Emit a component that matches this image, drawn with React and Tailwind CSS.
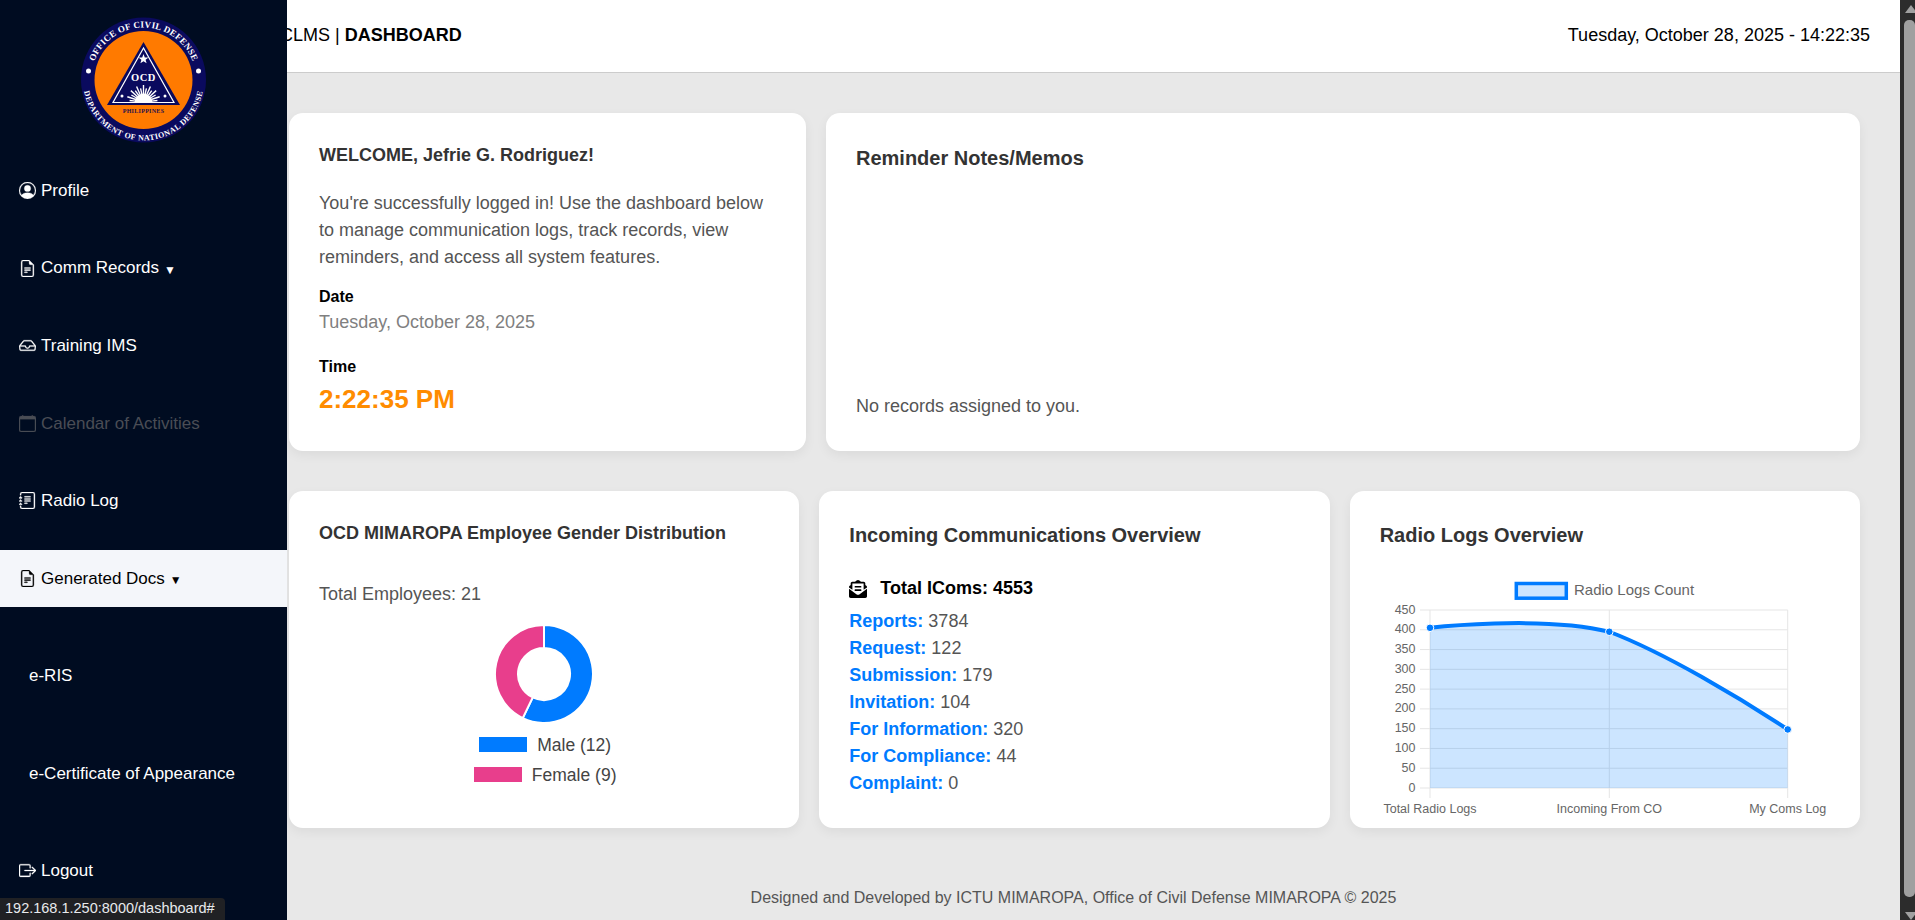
import {
  BsPersonCircle,
  BsFileEarmarkText,
  BsInbox,
  BsCalendar,
  BsJournalText,
  BsBoxArrowRight,
} from 'react-icons/bs';
import { FaEnvelopeOpenText } from 'react-icons/fa';

function Logo() {
  const rays = [];
  for (let a = -84; a <= 84; a += 12) {
    const r = (a * Math.PI) / 180;
    const len = a % 24 === 0 ? 17 : 14;
    rays.push(
      <line
        key={a}
        x1={142.5 + 8 * Math.sin(r)}
        y1={102 - 8 * Math.cos(r)}
        x2={142.5 + len * Math.sin(r)}
        y2={102 - len * Math.cos(r)}
        stroke="#fff"
        strokeWidth="1.4"
      />
    );
  }
  return (
    <svg width="140" height="140" viewBox="72 10 140 140" className="shrink-0">
      <defs>
        <path id="logoTop" d="M 90 80 A 52.5 52.5 0 0 1 195 80" />
        <path id="logoBottom" d="M 82 80 A 60.5 60.5 0 0 0 203 80" />
      </defs>
      <circle cx="142.5" cy="80" r="62.5" fill="#0a0a5e" />
      <circle cx="142.5" cy="80" r="49" fill="#ff7a00" />
      <text fontFamily="Liberation Serif, serif" fontSize="9" fontWeight="700" fill="#fff" letterSpacing="0.3">
        <textPath href="#logoTop" startOffset="50%" textAnchor="middle">OFFICE OF CIVIL DEFENSE</textPath>
      </text>
      <text fontFamily="Liberation Serif, serif" fontSize="8" fontWeight="700" fill="#fff" letterSpacing="0.5">
        <textPath href="#logoBottom" startOffset="50%" textAnchor="middle">DEPARTMENT OF NATIONAL DEFENSE</textPath>
      </text>
      <circle cx="87.5" cy="71" r="2.5" fill="#fff" />
      <circle cx="197.5" cy="71" r="2.5" fill="#fff" />
      <polygon points="142.5,42 106,105 179,105" fill="#0a0a5e" />
      <polygon points="142.5,48 112,102.5 173,102.5" fill="none" stroke="#fff" strokeWidth="1.2" />
      <polygon points="142.5,54 143.8,57.5 147.5,57.5 144.6,59.8 145.6,63.3 142.5,61.2 139.4,63.3 140.4,59.8 137.5,57.5 141.2,57.5" fill="#fff" />
      <text x="142.5" y="80.5" textAnchor="middle" fontFamily="Liberation Serif, serif" fontSize="10.5" fontWeight="700" fill="#fff" letterSpacing="0.5">OCD</text>
      {rays}
      <path d="M 133.5 102.5 A 9 9 0 0 1 151.5 102.5 Z" fill="#fff" />
      <circle cx="121" cy="96" r="1.5" fill="#fff" />
      <circle cx="164" cy="96" r="1.5" fill="#fff" />
      <text x="142.5" y="113" textAnchor="middle" fontFamily="Liberation Serif, serif" fontSize="6" fontWeight="700" fill="#26124f" letterSpacing="0.3">PHILIPPINES</text>
    </svg>
  );
}

function NavItem({ icon: Icon, label, caret, active, muted }) {
  return (
    <a
      href="#"
      className={`flex h-[57px] items-center pl-[19px] text-[17px] ${
        active ? 'bg-[#f4f6fa] text-black' : muted ? 'text-[#4a4d55]' : 'text-white'
      }`}
    >
      <Icon className="mr-[5px] h-[17px] w-[17px] shrink-0 stroke-[0.25]" />
      <span>{label}</span>
      {caret && <span className="mt-[3px] ml-[5px] text-[12px] leading-none">▼</span>}
    </a>
  );
}

function Sidebar() {
  return (
    <aside className="relative flex h-[920px] w-[287px] shrink-0 flex-col bg-[#000c21]">
      <div className="flex h-[162px] justify-center pt-[10px] pr-[2px]">
        <Logo />
      </div>
      <nav className="flex flex-col gap-[20.6px]">
        <NavItem icon={BsPersonCircle} label="Profile" />
        <NavItem icon={BsFileEarmarkText} label="Comm Records" caret />
        <NavItem icon={BsInbox} label="Training IMS" />
        <NavItem icon={BsCalendar} label="Calendar of Activities" muted />
        <NavItem icon={BsJournalText} label="Radio Log" />
        <NavItem icon={BsFileEarmarkText} label="Generated Docs" caret active />
        <div className="mt-[20px] flex h-[57px] items-center pl-[29px] text-[17px] text-white">e-RIS</div>
        <div className="mt-[20px] flex h-[57px] items-center pl-[29px] text-[17px] text-white">e-Certificate of Appearance</div>
        <div className="mt-[19px]">
          <NavItem icon={BsBoxArrowRight} label="Logout" />
        </div>
      </nav>
      <div className="absolute bottom-0 left-0 flex h-[22px] w-[225px] items-center rounded-tr-[4px] bg-[#202124] pl-[5px] text-[14.5px] whitespace-nowrap text-[#e8eaed]">
        192.168.1.250:8000/dashboard#
      </div>
    </aside>
  );
}

function Card({ className = '', children }) {
  return (
    <div className={`rounded-[14px] bg-white p-[30px] shadow-[0_4px_12px_rgba(0,0,0,0.06)] ${className}`}>
      {children}
    </div>
  );
}

function WelcomeCard() {
  return (
    <Card>
      <h2 className="text-[18px] leading-[24px] font-bold text-[#333]">WELCOME, Jefrie G. Rodriguez!</h2>
      <p className="mt-[22.5px] text-[18px] leading-[27px] text-[#555]">
        You're successfully logged in! Use the dashboard below to manage communication logs, track records, view
        reminders, and access all system features.
      </p>
      <div className="mt-[14.5px] text-[16px] leading-[24px] font-bold text-black">Date</div>
      <div className="text-[18px] leading-[26px] text-[#808080]">Tuesday, October 28, 2025</div>
      <div className="mt-[20px] text-[16px] leading-[24px] font-bold text-black">Time</div>
      <div className="mt-[3px] text-[26px] leading-[34px] font-bold text-[#ff8c00]">2:22:35 PM</div>
    </Card>
  );
}

function ReminderCard() {
  return (
    <Card className="flex flex-col justify-between">
      <h2 className="mt-[1px] text-[20px] leading-[28px] font-bold text-[#333]">Reminder Notes/Memos</h2>
      <p className="mb-[1px] text-[18px] leading-[27px] text-[#555]">No records assigned to you.</p>
    </Card>
  );
}

function Donut() {
  const cx = 50;
  const cy = 50;
  const R = 49;
  const r = 26;
  const pt = (rad, deg) => {
    const a = (deg * Math.PI) / 180;
    return `${cx + rad * Math.sin(a)} ${cy - rad * Math.cos(a)}`;
  };
  const split = (12 / 21) * 360;
  const male = `M ${pt(R, 0)} A ${R} ${R} 0 1 1 ${pt(R, split)} L ${pt(r, split)} A ${r} ${r} 0 1 0 ${pt(r, 0)} Z`;
  const female = `M ${pt(R, split)} A ${R} ${R} 0 0 1 ${pt(R, 360)} L ${pt(r, 360)} A ${r} ${r} 0 0 0 ${pt(r, split)} Z`;
  return (
    <svg width="100" height="100" viewBox="0 0 100 100">
      <path d={male} fill="#007bff" stroke="#fff" strokeWidth="2" />
      <path d={female} fill="#e83e8c" stroke="#fff" strokeWidth="2" />
    </svg>
  );
}

function GenderCard() {
  return (
    <Card>
      <h2 className="-mt-[1px] text-[18px] leading-[26px] font-bold text-[#333]">OCD MIMAROPA Employee Gender Distribution</h2>
      <p className="mt-[35px] text-[18px] leading-[27px] text-[#555]">Total Employees: 21</p>
      <div className="mt-[15.5px] flex justify-center">
        <Donut />
      </div>
      <div className="mt-[6px] flex flex-col items-center pl-[2px] text-[17.5px] leading-[30px] text-[#444]">
        <div className="flex items-center gap-[10px]">
          <span className="h-[15px] w-[48px] bg-[#007bff]" />
          <span>Male (12)</span>
        </div>
        <div className="flex items-center gap-[10px]">
          <span className="h-[15px] w-[48px] bg-[#e83e8c]" />
          <span>Female (9)</span>
        </div>
      </div>
    </Card>
  );
}

const icoms = [
  ['Reports', 3784],
  ['Request', 122],
  ['Submission', 179],
  ['Invitation', 104],
  ['For Information', 320],
  ['For Compliance', 44],
  ['Complaint', 0],
];

function IncomingCard() {
  return (
    <Card>
      <h2 className="text-[20px] leading-[28px] font-bold text-[#333]">Incoming Communications Overview</h2>
      <div className="mt-[25.5px] flex h-[28px] items-center text-[18px] font-bold text-black">
        <FaEnvelopeOpenText className="mr-[13px] h-[18px] w-[18px]" />
        Total IComs: 4553
      </div>
      <ul className="mt-[5px] text-[18px] leading-[27px] text-[#555]">
        {icoms.map(([name, count]) => (
          <li key={name}>
            <span className="font-bold text-[#007bff]">{name}:</span> {count}
          </li>
        ))}
      </ul>
    </Card>
  );
}

function RadioChart() {
  const left = 50;
  const right = 407.7;
  const mid = 229.3;
  const top = 37;
  const bottom = 215;
  const ticks = [450, 400, 350, 300, 250, 200, 150, 100, 50, 0];
  const y = v => bottom - (v / 450) * (bottom - top);
  const curve = `M ${left} ${y(405)} C ${left} ${y(405)} 162.4 42 ${mid} ${y(395)} C 285 80 360 125 ${right} ${y(148)}`;
  return (
    <svg width="450" height="250" viewBox="0 0 450 250" className="block">
      <rect x="136.3" y="10.5" width="50" height="14.7" fill="#cce5ff" stroke="#007bff" strokeWidth="3.5" />
      <text x="194" y="22" fontSize="15" fill="#666" fontFamily="Liberation Sans, sans-serif">Radio Logs Count</text>
      {ticks.map(t => (
        <g key={t}>
          <line x1={left - 10} x2={right} y1={y(t)} y2={y(t)} stroke="#e5e5e5" />
          <text x={left - 14.5} y={y(t) + 3.5} textAnchor="end" fontSize="12.5" fill="#666" fontFamily="Liberation Sans, sans-serif">{t}</text>
        </g>
      ))}
      {[left, mid, right].map(x => (
        <line key={x} x1={x} x2={x} y1={top} y2={bottom + 10} stroke="#e5e5e5" />
      ))}
      <path d={`${curve} L ${right} ${bottom} L ${left} ${bottom} Z`} fill="rgba(0,123,255,0.2)" />
      <path d={curve} fill="none" stroke="#007bff" strokeWidth="4" />
      {[[left, 405], [mid, 395], [right, 148]].map(([x, v]) => (
        <circle key={x} cx={x} cy={y(v)} r="3.8" fill="#007bff" stroke="#fff" />
      ))}
      {[[left, 'Total Radio Logs'], [mid, 'Incoming From CO'], [right, 'My Coms Log']].map(([x, label]) => (
        <text key={label} x={x} y="239.5" textAnchor="middle" fontSize="12.5" fill="#666" fontFamily="Liberation Sans, sans-serif">{label}</text>
      ))}
    </svg>
  );
}

function RadioCard() {
  return (
    <Card className="pb-0">
      <h2 className="text-[20px] leading-[28px] font-bold text-[#333]">Radio Logs Overview</h2>
      <div className="mt-[24px]">
        <RadioChart />
      </div>
    </Card>
  );
}

function Scrollbar() {
  return (
    <div className="relative h-[920px] w-[15px] shrink-0 bg-[#2c2c2c]">
      <div className="absolute top-[5px] right-[-2px] h-0 w-0 border-x-[6px] border-b-[8px] border-x-transparent border-b-[#a0a0a0]" />
      <div className="absolute top-[20px] right-0 bottom-[23px] w-[11px] rounded-[5px] bg-[#a0a0a0]" />
      <div className="absolute right-[-2px] bottom-0 h-0 w-0 border-x-[6px] border-t-[8px] border-x-transparent border-t-[#a0a0a0]" />
    </div>
  );
}

export default function App() {
  return (
    <div className="flex h-[920px] overflow-hidden bg-[#e8e8e8] font-['Liberation_Sans',Arial,sans-serif]">
      <Sidebar />
      <main className="flex min-w-0 flex-1 flex-col">
        <header className="flex h-[73px] shrink-0 items-center justify-between overflow-hidden border-b border-[#ccc] bg-white pr-[30px] pb-[2px] text-[18px] text-black">
          <div className="-ml-[7px]">
            CLMS | <span className="font-bold">DASHBOARD</span>
          </div>
          <div>Tuesday, October 28, 2025 - 14:22:35</div>
        </header>
        <div className="flex flex-1 flex-col gap-[40px] pt-[40px] pr-[40px] pl-[2px]">
          <div className="grid h-[338px] grid-cols-[1fr_2fr] gap-[20px]">
            <WelcomeCard />
            <ReminderCard />
          </div>
          <div className="grid h-[337px] grid-cols-3 gap-[20px]">
            <GenderCard />
            <IncomingCard />
            <RadioCard />
          </div>
        </div>
        <footer className="flex h-[44px] shrink-0 items-center justify-center pr-[40px] text-[16px] text-[#555]">
          Designed and Developed by ICTU MIMAROPA, Office of Civil Defense MIMAROPA © 2025
        </footer>
      </main>
      <Scrollbar />
    </div>
  );
}
